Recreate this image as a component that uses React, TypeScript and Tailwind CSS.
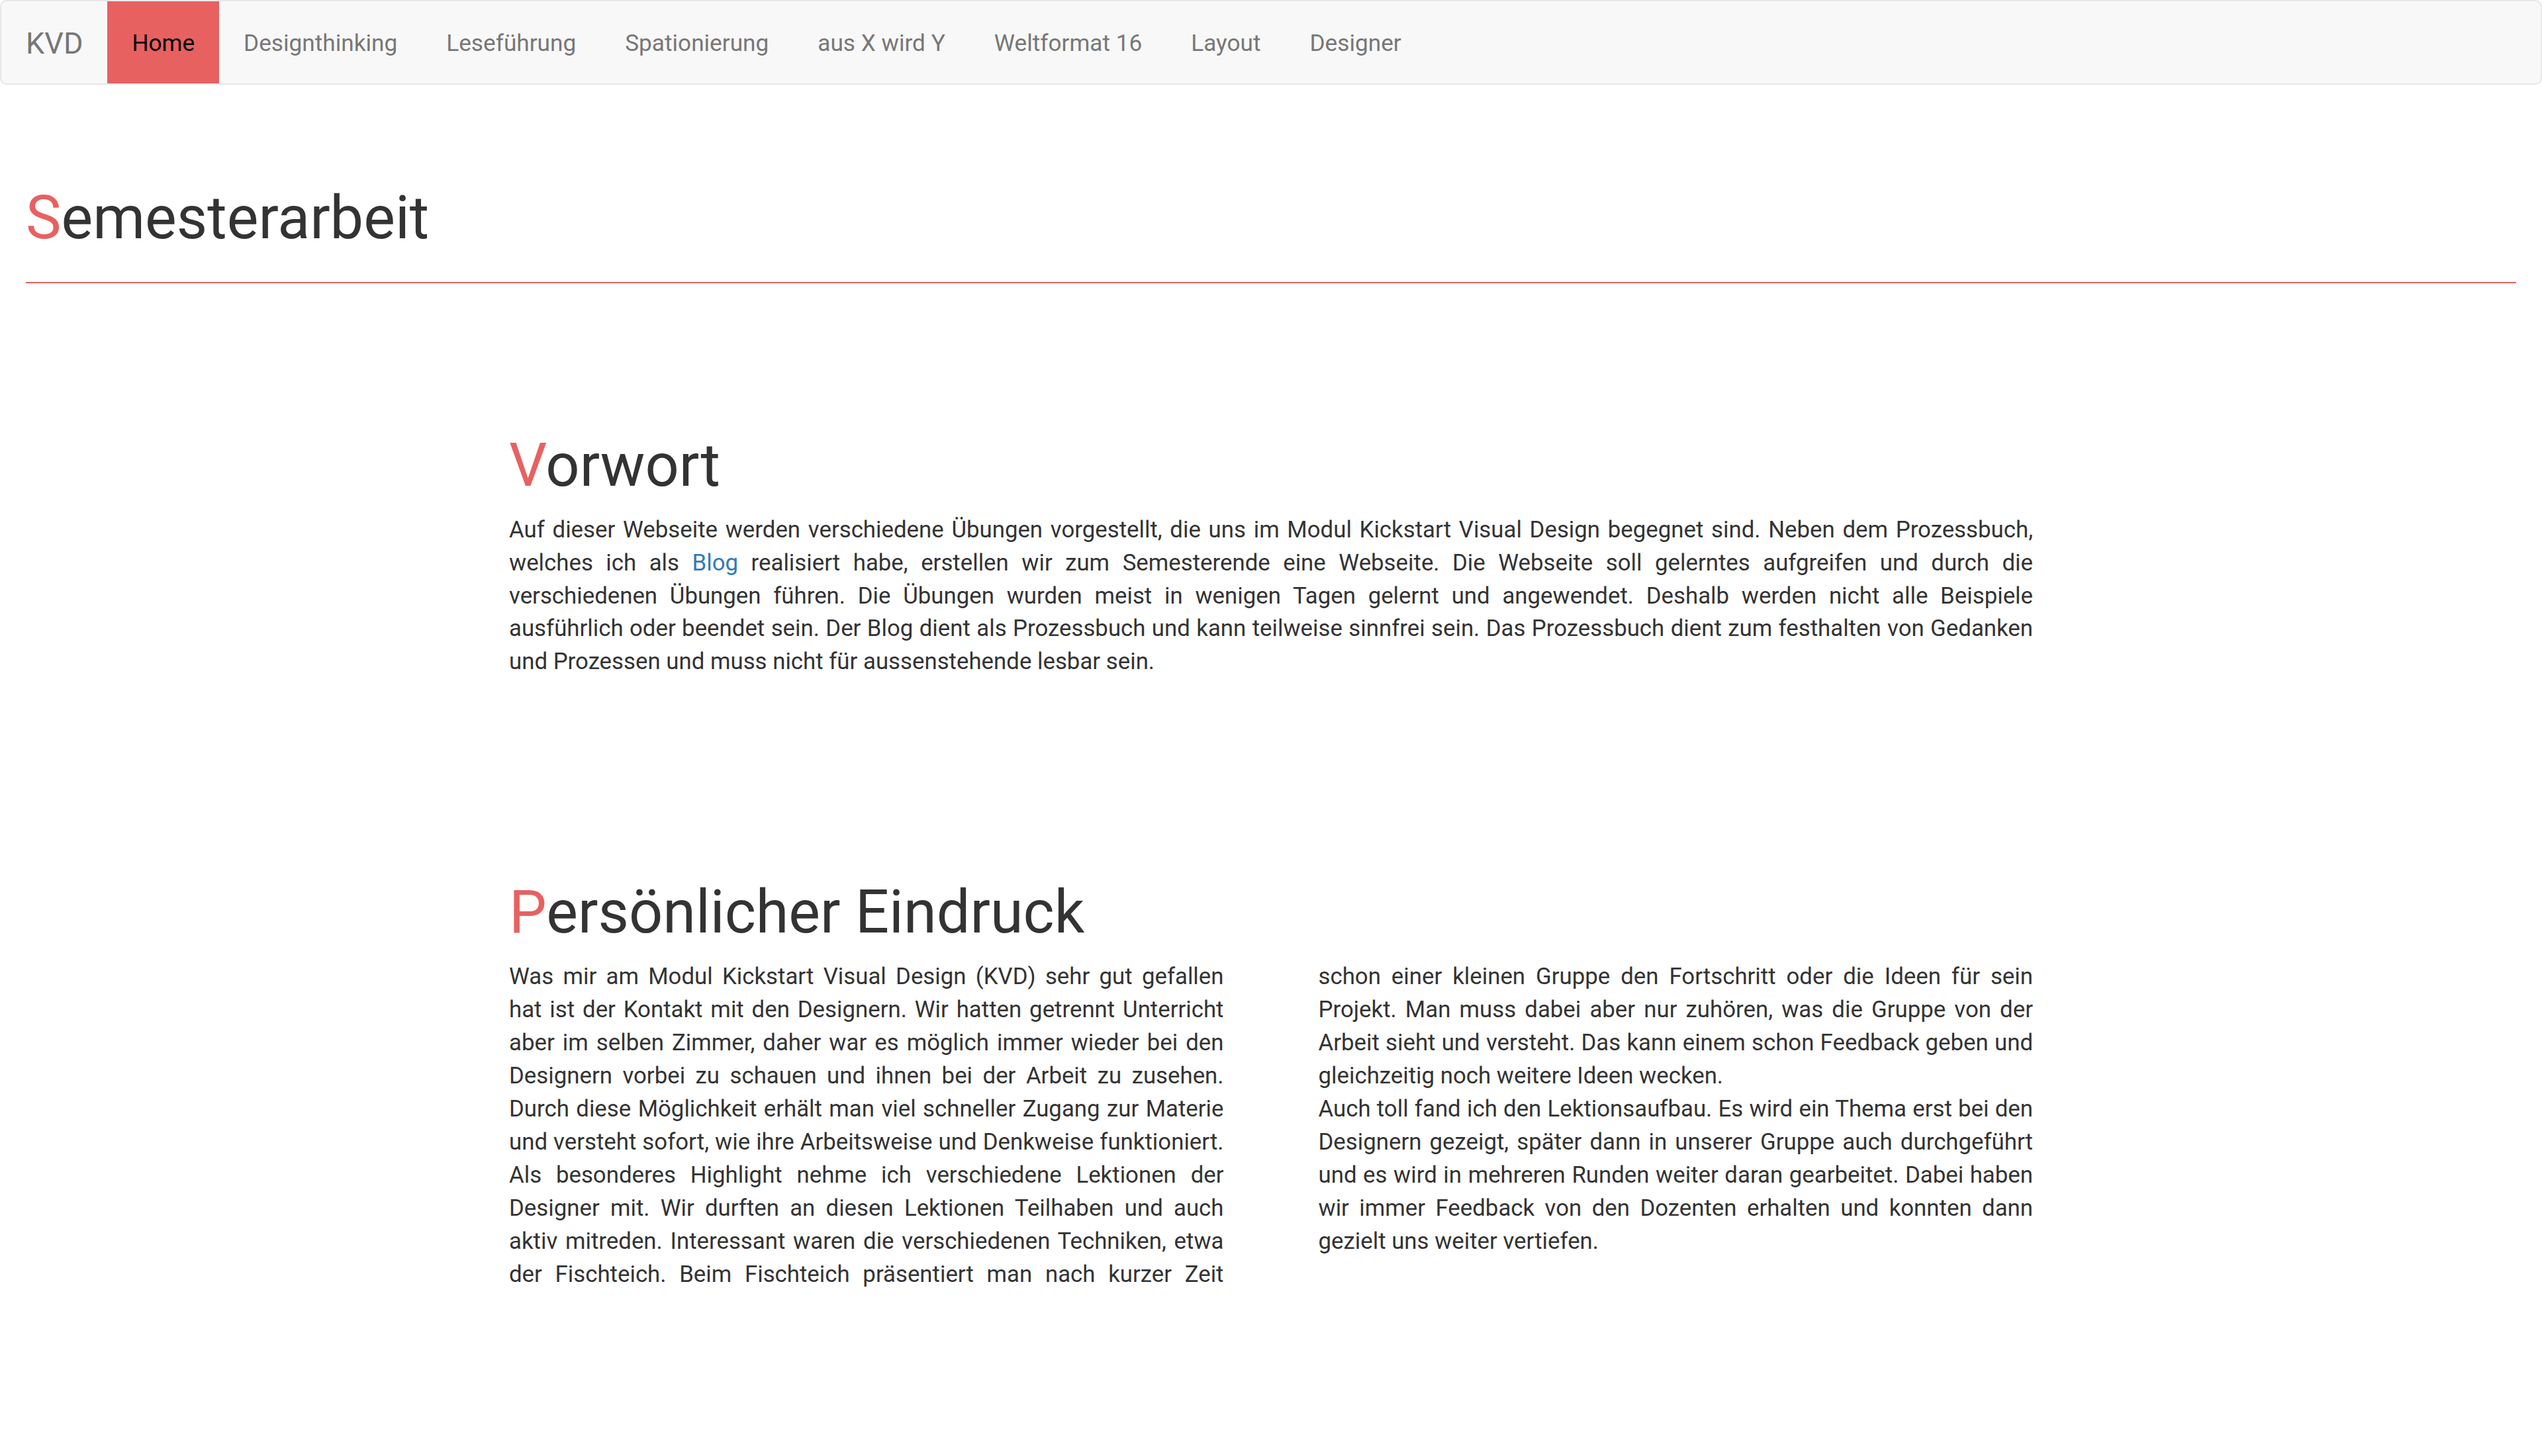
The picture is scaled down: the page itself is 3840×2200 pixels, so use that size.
import React from 'react';

const navItems = [
  'Home',
  'Designthinking',
  'Leseführung',
  'Spationierung',
  'aus X wird Y',
  'Weltformat 16',
  'Layout',
  'Designer',
];

// red first letter, rest in the heading colour
const Title: React.FC<{ text: string }> = ({ text }) => (
  <h2 className="text-[90px] leading-[97px] font-normal">
    <span className="text-[#e86161]">{text.charAt(0)}</span>
    {text.slice(1)}
  </h2>
);

const App: React.FC = () => {
  return (
    <div className="min-h-screen bg-white font-[Roboto,sans-serif] text-[#333]">
      {/* Navbar */}
      <nav className="flex h-[128px] items-stretch rounded-[10px] border-2 border-[#e7e7e7] bg-[#f8f8f8]">
        <a href="#" className="flex items-center px-[37px] pt-[3px] text-[45px] leading-[49px] text-[#777]">
          KVD
        </a>
        <ul className="flex items-stretch">
          {navItems.map((item) => (
            <li key={item} className="flex">
              <a
                href="#"
                className={`flex items-center px-[37px] pt-[2px] text-[35.2px] leading-[49px] ${
                  item === 'Home' ? 'bg-[#e86161] text-black' : 'text-[#777]'
                }`}
              >
                {item}
              </a>
            </li>
          ))}
        </ul>
      </nav>

      {/* Page header */}
      <div className="px-[39px]">
        <div className="border-b-2 border-[#e86161] pb-[48px]">
          <h1 className="mt-[153px] text-[90px] leading-[97px] font-normal">
            <span className="text-[#e86161]">S</span>emesterarbeit
          </h1>
        </div>
      </div>

      <main className="mx-auto w-[2302px] pb-[200px]">
        {/* Vorwort */}
        <section className="mt-[227px]">
          <Title text="Vorwort" />
          <p className="mt-[24px] text-justify text-[34.8px] leading-[49.8px]">
            Auf dieser Webseite werden verschiedene Übungen vorgestellt, die uns im Modul Kickstart Visual Design
            begegnet sind. Neben dem Prozessbuch, welches ich als{' '}
            <a href="#" className="text-[#337ab7]">
              Blog
            </a>{' '}
            realisiert habe, erstellen wir zum Semesterende eine Webseite. Die Webseite soll gelerntes aufgreifen und
            durch die verschiedenen Übungen führen. Die Übungen wurden meist in wenigen Tagen gelernt und angewendet.
            Deshalb werden nicht alle Beispiele ausführlich oder beendet sein. Der Blog dient als Prozessbuch und kann
            teilweise sinnfrei sein. Das Prozessbuch dient zum festhalten von Gedanken und Prozessen und muss nicht für
            aussenstehende lesbar sein.
          </p>
        </section>

        {/* Persönlicher Eindruck */}
        <section className="mt-[305px]">
          <Title text="Persönlicher Eindruck" />
          <p className="mt-[23px] columns-2 gap-x-[143px] text-justify text-[34.8px] leading-[50px]">
            Was mir am Modul Kickstart Visual Design (KVD) sehr gut gefallen hat ist der Kontakt mit den Designern. Wir
            hatten getrennt Unterricht aber im selben Zimmer, daher war es möglich immer wieder bei den Designern vorbei
            zu schauen und ihnen bei der Arbeit zu zusehen. Durch diese Möglichkeit erhält man viel schneller Zugang zur
            Materie und versteht sofort, wie ihre Arbeitsweise und Denkweise funktioniert. Als besonderes Highlight nehme
            ich verschiedene Lektionen der Designer mit. Wir durften an diesen Lektionen Teilhaben und auch aktiv
            mitreden. Interessant waren die verschiedenen Techniken, etwa der Fischteich. Beim Fischteich präsentiert man
            nach kurzer Zeit schon einer kleinen Gruppe den Fortschritt oder die Ideen für sein Projekt. Man muss dabei
            aber nur zuhören, was die Gruppe von der Arbeit sieht und versteht. Das kann einem schon Feedback geben und
            gleichzeitig noch weitere Ideen wecken.
            <br />
            Auch toll fand ich den Lektionsaufbau. Es wird ein Thema erst bei den Designern gezeigt, später dann in
            unserer Gruppe auch durchgeführt und es wird in mehreren Runden weiter daran gearbeitet. Dabei haben wir
            immer Feedback von den Dozenten erhalten und konnten dann gezielt uns weiter vertiefen.
          </p>
        </section>
      </main>
    </div>
  );
};

export default App;
